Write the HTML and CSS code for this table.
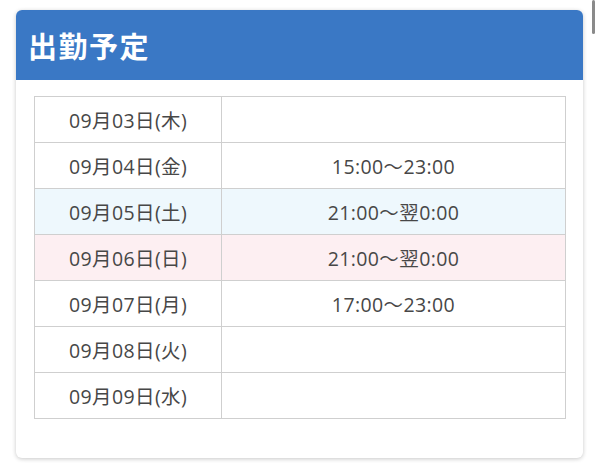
FILE: index.html
```html
<!DOCTYPE html>
<html lang="ja">
<head>
<meta charset="utf-8">
<link rel="stylesheet" href="styles.css">
</head>
<body>
<div class="card">
  <div class="card-head"><h2 class="title">出勤予定</h2></div>
  <div class="card-body">
    <table class="sched">
      <tr><td class="day">09月03日(木)</td><td class="time"></td></tr>
      <tr><td class="day">09月04日(金)</td><td class="time">15:00〜23:00</td></tr>
      <tr class="sat"><td class="day">09月05日(土)</td><td class="time">21:00〜翌0:00</td></tr>
      <tr class="sun"><td class="day">09月06日(日)</td><td class="time">21:00〜翌0:00</td></tr>
      <tr><td class="day">09月07日(月)</td><td class="time">17:00〜23:00</td></tr>
      <tr><td class="day">09月08日(火)</td><td class="time"></td></tr>
      <tr><td class="day">09月09日(水)</td><td class="time"></td></tr>
    </table>
  </div>
</div>
<div class="scrollbar"></div>
</body>
</html>
```
FILE: styles.css
```css
html, body {
  margin: 0;
  padding: 0;
  background: #ffffff;
}
body {
  font-family: "Open Sans", "Noto Sans CJK JP", sans-serif;
  color: #474747;
  width: 600px;
  height: 468px;
  overflow: hidden;
  position: relative;
}
.card {
  margin: 10px 0 0 16px;
  width: 567px;
  height: 448px;
  background: #fff;
  border-radius: 6px;
  box-shadow: 0 1px 4px rgba(0,0,0,0.22);
  overflow: hidden;
  box-sizing: border-box;
}
.card-head {
  background: #3a78c5;
  height: 70px;
  display: flex;
  align-items: center;
  padding-left: 12px;
}
.title {
  margin: 0;
  color: #fff;
  font-family: "Noto Sans CJK JP", sans-serif;
  font-size: 29px;
  font-weight: 700;
  letter-spacing: 1.5px;
  line-height: 1;
}
.card-body {
  padding: 16px 17px 0 18px;
}
.sched {
  width: 532px;
  border-collapse: collapse;
  font-size: 19.5px;
  font-weight: 400;
}
.sched td {
  border: 1px solid #cfcfcf;
  height: 45px;
  padding: 0;
  text-align: center;
  vertical-align: middle;
  letter-spacing: 0.4px;
}
.sched td.day {
  width: 186px;
}
.sat td { background: #eef8fd; }
.sun td { background: #fdeff2; }
.scrollbar {
  position: absolute;
  top: 0;
  left: 592px;
  width: 3px;
  height: 34px;
  background: #8a8a8a;
  border-radius: 2px;
}
```
